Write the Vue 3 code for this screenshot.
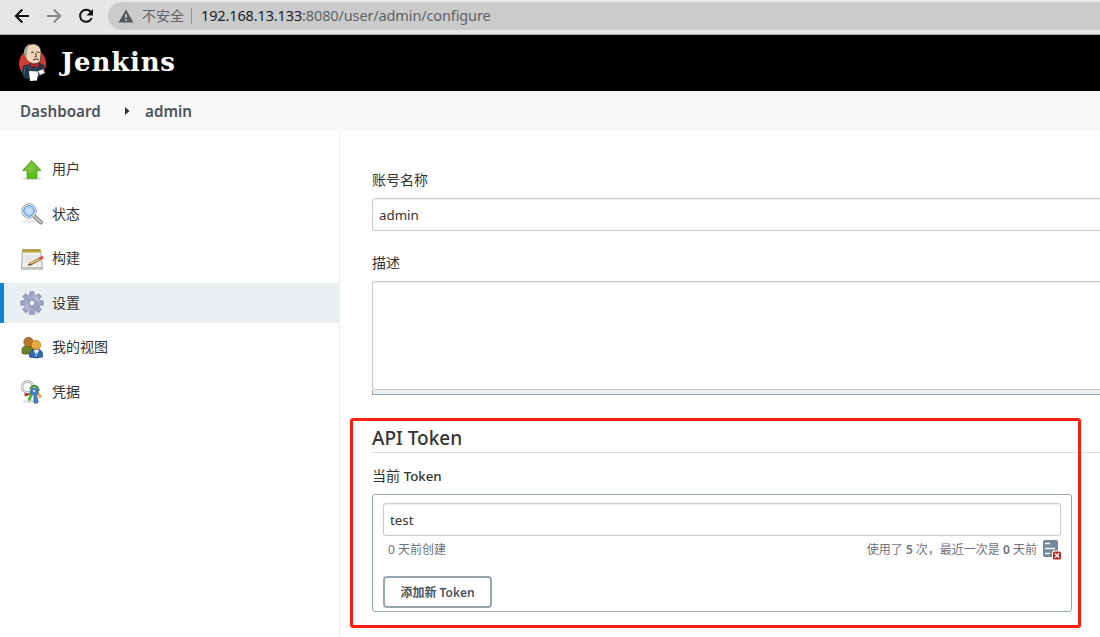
<script setup>
const teeth = [0, 45, 90, 135, 180, 225, 270, 315]
const items = [
  { id: 'up', label: '用户' },
  { id: 'search', label: '状态' },
  { id: 'builds', label: '构建' },
  { id: 'gear', label: '设置', active: true },
  { id: 'views', label: '我的视图' },
  { id: 'keys', label: '凭据' },
]
</script>

<template>
  <div class="page" lang="zh-CN">
    <div class="browser">
      <svg class="nav" width="108" height="32" viewBox="0 0 108 32" fill="none" stroke-width="2">
        <path d="M29 16H16.5M22.3 9.5L15.8 16l6.5 6.5" stroke="#101113" />
        <path d="M47 16h12.5M53.7 9.5l6.500 6.500-6.500 6.500" stroke="#85878a" />
        <path d="M91 12.300A6 6 0 1 0 91.700 18" stroke="#101113" />
        <path d="M93 9v6.500h-6.500z" fill="#101113" />
      </svg>
      <div class="omnibox">
        <svg class="warn" width="16" height="14" viewBox="0 0 16 14">
          <path d="M8 0.500L15.500 13.500H.5z" fill="#55585c" />
          <path d="M8 5v4M8 10.300v1.700" stroke="#cbcbcb" stroke-width="1.700" />
        </svg>
        <span class="unsafe">不安全</span>
        <i class="sep"></i>
        <span class="url"><b>192.168.13.133</b>:8080/user/admin/configure</span>
      </div>
    </div>

    <header class="header">
      <svg width="30" height="40" viewBox="0 0 30 40">
        <ellipse cx="14.500" cy="20.500" rx="13.500" ry="14.500" fill="#d33833" />
        <path d="M5 23l6-2 5 1 6-2 4 2 1 8-5 3-4 4-8-1-4-1-2-6z" fill="#20384a" />
        <path d="M7 24l-1 8M10 22l4 8 6-7" fill="none" stroke="#49728b" stroke-width=".8" />
        <path d="M7 8C7 3 11 1 16 1c5 1 7 4 7 9l-.5 7c-1 4-8 5-11 2-3-1-5-5-4.500-11z" fill="#f0d6b7" stroke="#302c2b" stroke-width=".7" />
        <path d="M6.500 13C5 7 7 3 12 1L9.500 6 9 13z" fill="#aaa9a3" />
        <path d="M8 11c-2 0-1 4 1 4" fill="#e1bd99" stroke="#655044" stroke-width=".6" />
        <path d="M13 9.500l3-.5M18.500 9l3 .5M17.500 10l1 3.500-2 .5M15 17q3-2 6-.5" fill="none" stroke="#4b3931" />
        <path d="M12 20l4 2 5-2-1 5-4-2-3 2z" fill="#d51f2b" stroke="#5b1c20" stroke-width=".5" />
        <path d="M11 28l9 .5-1 9-7 .5z" fill="#fff" />
        <path d="M20 28l5-2 2 4-5 2z" fill="#ead6cb" />
        <path d="M21 29h4M20 31l-1 2" stroke="#fff" stroke-width="1.500" />
      </svg>
      <span class="brand">Jenkins</span>
    </header>

    <nav class="crumbs">
      <span class="dash">Dashboard</span>
      <svg width="5" height="8" viewBox="0 0 5 8"><path d="M0 0l4.500 4L0 8z" fill="#333" /></svg>
      <span class="user">admin</span>
    </nav>

    <div class="body">
      <aside class="side">
        <div v-for="item in items" :key="item.id" class="item" :class="{ active: item.active }">
          <svg width="24" height="24" viewBox="0 0 24 24">
            <defs>
              <linearGradient id="green" x2="0" y2="1"><stop stop-color="#73b82d" /><stop offset="1" stop-color="#4fc50d" /></linearGradient>
              <linearGradient id="metal" x2="1" y2="1"><stop stop-color="#7f91b5" /><stop offset=".5" stop-color="#b7bdd6" /><stop offset="1" stop-color="#8587b0" /></linearGradient>
              <radialGradient id="lens"><stop stop-color="#d8ebff" /><stop offset="1" stop-color="#84b7e9" /></radialGradient>
            </defs>
            <template v-if="item.id === 'up'">
              <ellipse cx="12" cy="20.500" rx="10" ry="2" fill="#e2e2e2" />
              <path d="M11.700 2.500L21 12.500h-4V20.500H7V12.500H2.500z" fill="url(#green)" stroke="#4d982c" stroke-width=".8" />
              <path d="M11.700 4.500L5 11.500h3v4q5-1 8-5z" fill="#9acd63" opacity=".45" />
            </template>
            <template v-else-if="item.id === 'search'">
              <ellipse cx="10" cy="19.500" rx="9" ry="2" fill="#ebebeb" />
              <path d="M15 15l6 5.500" stroke="#777b78" stroke-width="4" stroke-linecap="round" />
              <path d="M15 15l6 5.500" stroke="#c9ccc9" stroke-width="2" stroke-linecap="round" />
              <circle cx="9" cy="9" r="7.200" fill="url(#lens)" stroke="#8e9698" />
              <circle cx="9" cy="9" r="6.200" fill="none" stroke="#e9f2f8" stroke-width="1.200" />
              <circle cx="9" cy="9" r="5.300" fill="none" stroke="#5e93cf" stroke-width=".9" />
            </template>
            <template v-else-if="item.id === 'builds'">
              <path d="M2.500 2.500h18l2 19.500h-21z" fill="#eeeeec" stroke="#a7a8a4" />
              <path d="M2 20h20v2.500H2z" fill="#c1c1bd" />
              <path d="M3 2.500h17.500v3H3z" fill="#c5ae38" />
              <path d="M4 2v3M7 2v3M10 2v3M13 2v3M16 2v3M19 2v3" stroke="#947e20" stroke-width=".7" />
              <path d="M5 9h14M5 11h9M5 13h7M5 15h6" stroke="#d6d7d3" stroke-width=".8" />
              <path d="M10 17.300L20.500 11.500" stroke="#725019" stroke-width="3" />
              <path d="M10 17L20.500 11.500" stroke="#eac177" stroke-width="1.700" />
              <path d="M20.500 11.300l1.500-.8" stroke="#df5147" stroke-width="3" stroke-linecap="round" />
              <path d="M7 18.500l3-2.200 1.200 1.900z" fill="#4f4227" />
            </template>
            <template v-else-if="item.id === 'gear'">
              <ellipse cx="12" cy="21.500" rx="8" ry="2" fill="#cfd4dc" />
              <g fill="#9da7c8" stroke="#747fa3" stroke-width=".7">
                <path v-for="angle in teeth" :key="angle" d="M9.500 6L10 .8h4l.5 5.200z" :transform="`rotate(${angle} 12 12)`" />
              </g>
              <circle cx="12" cy="12" r="8.200" fill="url(#metal)" />
              <circle cx="12" cy="12" r="4.500" fill="#8990b3" opacity=".5" />
              <circle cx="12" cy="12" r="3" fill="#eaeff2" stroke="#7480a6" stroke-width=".8" />
            </template>
            <template v-else-if="item.id === 'views'">
              <path d="M2 17v-3q0-4 5-4 5-1 7 4v4H3z" fill="#718226" stroke="#4c5b16" stroke-width=".8" />
              <circle cx="8.500" cy="6" r="4.700" fill="#b6782d" stroke="#80501c" stroke-width=".7" />
              <path d="M9.500 21v-3q1-5 6.500-5 6 0 6.500 5v3q-7 2-13 0z" fill="#356bae" stroke="#234f87" stroke-width=".8" />
              <path d="M14 14l2 7 3-7z" fill="#fff" /><path d="M16 15l-.5 4h1.500z" fill="#3569ae" />
              <circle cx="16" cy="9" r="4.700" fill="#e9a642" stroke="#b87325" stroke-width=".7" />
            </template>
            <template v-else>
              <ellipse cx="11" cy="21.500" rx="9" ry="1.500" fill="#ddd" />
              <path d="M11 12l-5 2.500" stroke="#b82927" stroke-width="3.500" stroke-linecap="round" />
              <path d="M12 12l-3 8.500" stroke="#4eb633" stroke-width="3" />
              <path d="M15 10l6 7.500" stroke="#dab354" stroke-width="3" />
              <circle cx="7.500" cy="7" r="5.500" fill="none" stroke="#999" stroke-width="2.300" />
              <circle cx="7.500" cy="7" r="5.500" fill="none" stroke="#f1f1f1" stroke-width="1.200" />
              <path d="M10 9q3-5 7-2l2 4" fill="none" stroke="#4e9a3b" stroke-width="2.300" />
              <path d="M10.500 12q0-4 4-4 4 1 3.500 5l-1.500 2 1.500 7-2 1.500-2-1v-7q-3-1-3.500-3.500z" fill="#4684cc" stroke="#285493" stroke-width=".8" />
              <circle cx="14" cy="11" r="1" fill="#fff" />
            </template>
          </svg>
          <span>{{ item.label }}</span>
        </div>
      </aside>

      <main class="main">
        <div class="label name">账号名称</div>
        <div class="field wide"><span class="adm">admin</span></div>
        <div class="label desc">描述</div>
        <div class="area"></div>
        <div class="handle"></div>
        <h2><span>API Token</span></h2>
        <div class="label current">当前 <span>Token</span></div>
        <section class="tokens">
          <div class="field">test</div>
          <div class="meta">
            <span class="created">0 天前创建</span>
            <span class="usage">使用了 <b>5</b> 次，最近一次是 <b>0</b> 天前</span>
            <svg width="18" height="20" viewBox="0 0 18 20">
              <rect width="15" height="17" rx="2" fill="#77889a" />
              <path d="M2 3.500h5M2 8.500h10M2 13.500h5" stroke="#fff" stroke-width="1.300" />
              <rect x="9" y="10.500" width="9" height="9.500" rx="2" fill="#fff" />
              <rect x="10" y="11.500" width="8" height="8" rx="1.500" fill="#b82d2c" />
              <path d="M12 13.500l4 4M16 13.500l-4 4" stroke="#fff" stroke-width="1.500" />
            </svg>
          </div>
          <button>添加新 <span>Token</span></button>
        </section>
      </main>
      <div class="highlight"></div>
    </div>
  </div>
</template>

<style>
body { margin: 0; overflow: hidden; }
</style>
<style scoped>
* { box-sizing: border-box; }
.page { width: 1100px; height: 637px; overflow: hidden; background: #fff; color: #333; font: 14px "Noto Sans", "Noto Sans CJK SC", sans-serif; position: relative; }
.browser { height: 35px; background: #e6e6e6; border-bottom: 1px solid #abaeb0; display: flex; }
.nav { flex: none; }
.omnibox { margin-top: 2px; width: 1010px; flex: none; height: 28px; border-radius: 14px 0 0 14px; background: #cbcbcb; display: flex; align-items: center; padding-left: 10px; white-space: nowrap; }
.unsafe { margin-left: 8px; padding-bottom: 2px; color: #5f6368; font-size: 14px; width: 43px; }
.sep { width: 1px; height: 16px; background: #94969a; margin-left: 6px; }
.url { margin-left: 9px; padding-bottom: 2px; font-size: 14.500px; color: #5f6368; letter-spacing: -.13px; }
.url b { font-weight: 400; color: #202124; }
.header { height: 56px; background: #000; display: flex; align-items: center; padding-left: 18px; }
.header svg { margin-top: -1px; }
.brand { color: #fff; font: bold 26px/34px "DejaVu Serif", serif; margin: -2px 0 0 13px; letter-spacing: .8px; }
.crumbs { height: 40px; background: #f8f8f8; display: flex; align-items: center; padding-left: 20px; color: #4d545d; font-size: 15.200px; font-weight: 600; }
.dash { width: 105px; }
.user { margin-left: 15px; }
.body { display: flex; height: 506px; }
.side { flex: none; width: 340px; border-right: 1px solid #eaeff2; padding-top: 18.500px; display: flex; flex-direction: column; gap: 4.500px; }
.item { height: 40px; display: flex; align-items: center; padding-left: 20px; gap: 8px; line-height: 20px; }
.item span { margin-top: -1px; }
.item.active { background: #eaeff2; border-left: 4px solid #0b86d2; padding-left: 16px; }
.main { flex: 1; padding: 38px 0 0 32px; min-width: 0; }
.label { line-height: 22px; }
.label.name { height: 29px; }
.field { height: 33px; border: 1px solid #c7c9cb; border-radius: 3px; padding-left: 6px; line-height: 32px; font-size: 13.300px; box-shadow: inset 0 1px 1px #eee; }
.field.wide { width: 760px; }
.desc { margin-top: 21px; height: 29px; }
.area { width: 760px; height: 109px; border: 1px solid #c3c7ca; border-radius: 3px 0 0 3px; box-shadow: inset 0 1px 1px #eee; }
.handle { width: 760px; height: 5px; border: 1px solid #98a6b0; border-top: 0; background: #eaeff2; }
h2 { height: 58px; margin: 0; padding-top: 30px; border-bottom: 1px solid #ddd; font-size: 19px; line-height: 26px; font-weight: 500; }
.current { margin-top: 12px; height: 29px; }
.current span { font-weight: 500; font-size: 13.300px; }
.tokens { width: 700px; height: 118px; border: 1px solid #98a6b0; border-radius: 3px; padding: 8px 10px; }
.meta { height: 27px; display: flex; align-items: center; color: #6b7280; font-size: 12px; padding-left: 5px; }
.meta span { margin-top: -2px; }
.usage { margin-left: auto; margin-right: 6px; }
.usage b { font-weight: 600; }
.meta svg { margin-top: 1px; }
button { display: block; margin-top: 13px; width: 109px; height: 32px; padding: 0; background: #fff; border: 2px solid #98a6b0; border-radius: 4px; font: 600 12px "Noto Sans", "Noto Sans CJK SC", sans-serif; color: #4d545d; }
.highlight { position: absolute; left: 350px; top: 418px; width: 731px; height: 210px; border: 3px solid #ff1c10; border-radius: 3px; pointer-events: none; }
</style>
